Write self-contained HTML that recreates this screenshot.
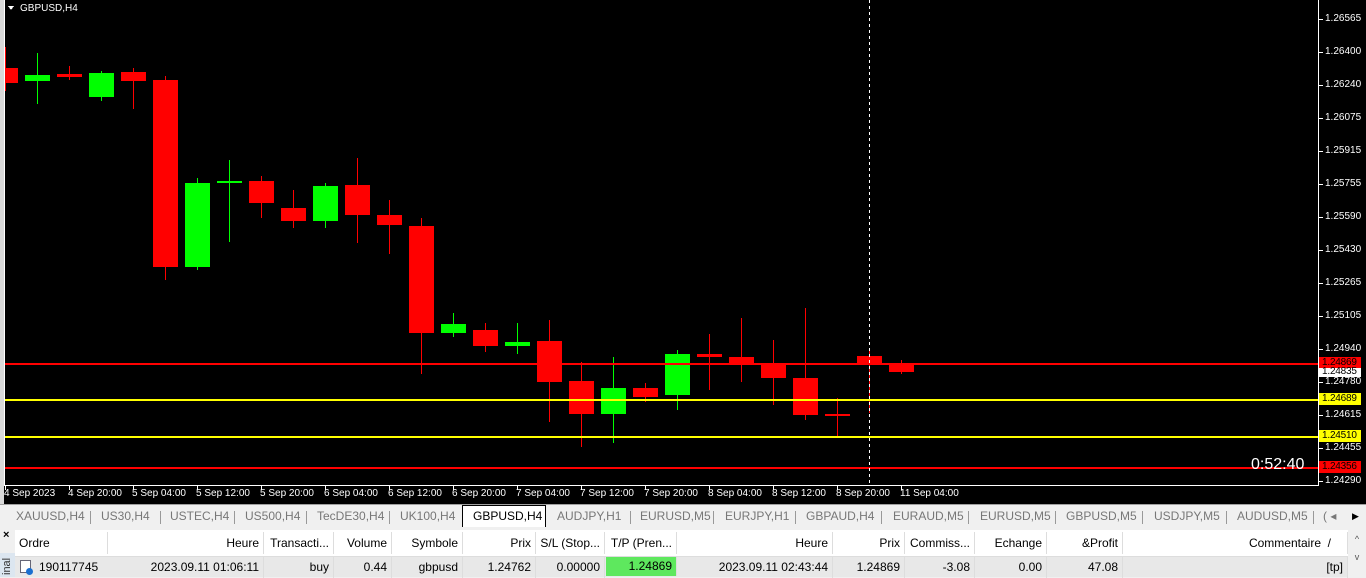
<!DOCTYPE html>
<html><head><meta charset="utf-8"><style>
*{margin:0;padding:0;box-sizing:border-box}
body{width:1366px;height:577px;overflow:hidden;background:#f0f0f0;font-family:"Liberation Sans",sans-serif;position:relative}
.ax{position:absolute;font-size:10px;color:#fff;font-family:"Liberation Sans",sans-serif}
.tg{position:absolute;font-size:10px;color:#000;left:1322px;letter-spacing:-0.2px}
.tabs{position:absolute;left:0;top:504px;width:1366px;height:24px;background:#f0f0f0;border-top:1px solid #a0a0a0}
.tab{position:absolute;top:4px;font-size:12px;color:#777;}
.sep{position:absolute;top:6px;width:1px;height:13px;background:#999}
.tbl{position:absolute;left:15px;top:530px;width:1351px;height:47px;background:#fff}
.c{position:absolute;font-size:12px;color:#000;height:22px;line-height:22px;padding:0 4px;border-right:1px solid #ddd;white-space:nowrap;overflow:hidden}
.r{text-align:right}
</style></head><body>
<svg width="1366" height="504" style="position:absolute;left:0;top:0" shape-rendering="crispEdges">
<rect x="0" y="0" width="1366" height="504" fill="#000"/>
<rect x="0" y="0" width="4" height="504" fill="#d8d8d8"/>
<rect x="4" y="0" width="1" height="485" fill="#fff"/>
<rect x="4" y="485" width="1314" height="1" fill="#fff"/>
<rect x="1318" y="0" width="1" height="486" fill="#fff"/>
<g fill="#fff">
<rect x="1319" y="19" width="4" height="1"/><rect x="1319" y="52" width="4" height="1"/><rect x="1319" y="85" width="4" height="1"/><rect x="1319" y="118" width="4" height="1"/><rect x="1319" y="151" width="4" height="1"/><rect x="1319" y="184" width="4" height="1"/><rect x="1319" y="217" width="4" height="1"/><rect x="1319" y="250" width="4" height="1"/><rect x="1319" y="283" width="4" height="1"/><rect x="1319" y="316" width="4" height="1"/><rect x="1319" y="349" width="4" height="1"/><rect x="1319" y="382" width="4" height="1"/><rect x="1319" y="415" width="4" height="1"/><rect x="1319" y="448" width="4" height="1"/><rect x="1319" y="481" width="4" height="1"/>
</g>
<g fill="#fff">
<rect x="5" y="486" width="1" height="4"/><rect x="69" y="486" width="1" height="4"/><rect x="133" y="486" width="1" height="4"/><rect x="197" y="486" width="1" height="4"/><rect x="261" y="486" width="1" height="4"/><rect x="325" y="486" width="1" height="4"/><rect x="389" y="486" width="1" height="4"/><rect x="453" y="486" width="1" height="4"/><rect x="517" y="486" width="1" height="4"/><rect x="581" y="486" width="1" height="4"/><rect x="645" y="486" width="1" height="4"/><rect x="709" y="486" width="1" height="4"/><rect x="773" y="486" width="1" height="4"/><rect x="837" y="486" width="1" height="4"/><rect x="901" y="486" width="1" height="4"/>
</g>
<g fill="#f00">
<rect x="5" y="47" width="1" height="44"/>
<rect x="69" y="66" width="1" height="14"/>
<rect x="133" y="68" width="1" height="41"/>
<rect x="165" y="76" width="1" height="204"/>
<rect x="261" y="176" width="1" height="42"/>
<rect x="293" y="190" width="1" height="38"/>
<rect x="357" y="158" width="1" height="85"/>
<rect x="389" y="200" width="1" height="54"/>
<rect x="421" y="218" width="1" height="156"/>
<rect x="485" y="323" width="1" height="29"/>
<rect x="549" y="320" width="1" height="102"/>
<rect x="581" y="362" width="1" height="85"/>
<rect x="645" y="383" width="1" height="19"/>
<rect x="709" y="334" width="1" height="56"/>
<rect x="741" y="318" width="1" height="64"/>
<rect x="773" y="340" width="1" height="65"/>
<rect x="805" y="308" width="1" height="112"/>
<rect x="837" y="398" width="1" height="39"/>
<rect x="869" y="349" width="1" height="64"/>
<rect x="901" y="360" width="1" height="14"/>
</g>
<g fill="#0f0">
<rect x="37" y="53" width="1" height="51"/>
<rect x="101" y="71" width="1" height="30"/>
<rect x="197" y="178" width="1" height="92"/>
<rect x="229" y="160" width="1" height="82"/>
<rect x="325" y="183" width="1" height="45"/>
<rect x="453" y="313" width="1" height="24"/>
<rect x="517" y="323" width="1" height="31"/>
<rect x="613" y="357" width="1" height="86"/>
<rect x="677" y="350" width="1" height="60"/>
</g>
<g fill="#f00">
<rect x="5" y="68" width="13" height="15"/>
<rect x="57" y="74" width="25" height="3"/>
<rect x="121" y="72" width="25" height="9"/>
<rect x="153" y="80" width="25" height="187"/>
<rect x="249" y="181" width="25" height="22"/>
<rect x="281" y="208" width="25" height="13"/>
<rect x="345" y="185" width="25" height="30"/>
<rect x="377" y="215" width="25" height="10"/>
<rect x="409" y="226" width="25" height="107"/>
<rect x="473" y="330" width="25" height="16"/>
<rect x="537" y="341" width="25" height="41"/>
<rect x="569" y="381" width="25" height="33"/>
<rect x="633" y="388" width="25" height="9"/>
<rect x="697" y="354" width="25" height="3"/>
<rect x="729" y="357" width="25" height="8"/>
<rect x="761" y="365" width="25" height="13"/>
<rect x="793" y="378" width="25" height="37"/>
<rect x="825" y="414" width="25" height="2"/>
<rect x="857" y="356" width="25" height="8"/>
<rect x="889" y="364" width="25" height="8"/>
</g>
<g fill="#0f0">
<rect x="25" y="75" width="25" height="6"/>
<rect x="89" y="73" width="25" height="24"/>
<rect x="185" y="183" width="25" height="84"/>
<rect x="217" y="181" width="25" height="2"/>
<rect x="313" y="186" width="25" height="35"/>
<rect x="441" y="324" width="25" height="9"/>
<rect x="505" y="342" width="25" height="4"/>
<rect x="601" y="388" width="25" height="26"/>
<rect x="665" y="354" width="25" height="41"/>
</g>
<rect x="5" y="363" width="1313" height="2" fill="#f00"/>
<rect x="5" y="399" width="1313" height="2" fill="#ff0"/>
<rect x="5" y="436" width="1313" height="2" fill="#ff0"/>
<rect x="5" y="467" width="1313" height="2" fill="#f00"/>
<line x1="869.5" y1="0" x2="869.5" y2="485" stroke="#fff" stroke-dasharray="3,3"/>
<rect x="1319" y="357" width="42" height="11" fill="#f00"/>
<rect x="1319" y="368" width="42" height="9" fill="#fff"/>
<rect x="1319" y="393" width="42" height="12" fill="#ff0"/>
<rect x="1319" y="430" width="42" height="12" fill="#ff0"/>
<rect x="1319" y="461" width="42" height="12" fill="#f00"/>
<polygon points="8,6 14,6 11,10" fill="#fff"/>
</svg>
<div class="ax" style="left:20px;top:3px;font-size:10px">GBPUSD,H4</div>
<div class="ax" style="left:1325px;top:13px">1.26565</div>
<div class="ax" style="left:1325px;top:46px">1.26400</div>
<div class="ax" style="left:1325px;top:79px">1.26240</div>
<div class="ax" style="left:1325px;top:112px">1.26075</div>
<div class="ax" style="left:1325px;top:145px">1.25915</div>
<div class="ax" style="left:1325px;top:178px">1.25755</div>
<div class="ax" style="left:1325px;top:211px">1.25590</div>
<div class="ax" style="left:1325px;top:244px">1.25430</div>
<div class="ax" style="left:1325px;top:277px">1.25265</div>
<div class="ax" style="left:1325px;top:310px">1.25105</div>
<div class="ax" style="left:1325px;top:343px">1.24940</div>
<div class="ax" style="left:1325px;top:376px">1.24780</div>
<div class="ax" style="left:1325px;top:409px">1.24615</div>
<div class="ax" style="left:1325px;top:442px">1.24455</div>
<div class="ax" style="left:1325px;top:475px">1.24290</div>
<div class="tg" style="top:357px">1.24869</div>
<div class="tg" style="top:366px">1.24835</div>
<div class="tg" style="top:393px">1.24689</div>
<div class="tg" style="top:430px">1.24510</div>
<div class="tg" style="top:461px">1.24356</div>
<div class="ax" style="left:1251px;top:456px;font-size:16px">0:52:40</div>
<div class="ax" style="left:4px;top:488px">4 Sep 2023</div>
<div class="ax" style="left:68px;top:488px">4 Sep 20:00</div>
<div class="ax" style="left:132px;top:488px">5 Sep 04:00</div>
<div class="ax" style="left:196px;top:488px">5 Sep 12:00</div>
<div class="ax" style="left:260px;top:488px">5 Sep 20:00</div>
<div class="ax" style="left:324px;top:488px">6 Sep 04:00</div>
<div class="ax" style="left:388px;top:488px">6 Sep 12:00</div>
<div class="ax" style="left:452px;top:488px">6 Sep 20:00</div>
<div class="ax" style="left:516px;top:488px">7 Sep 04:00</div>
<div class="ax" style="left:580px;top:488px">7 Sep 12:00</div>
<div class="ax" style="left:644px;top:488px">7 Sep 20:00</div>
<div class="ax" style="left:708px;top:488px">8 Sep 04:00</div>
<div class="ax" style="left:772px;top:488px">8 Sep 12:00</div>
<div class="ax" style="left:836px;top:488px">8 Sep 20:00</div>
<div class="ax" style="left:900px;top:488px">11 Sep 04:00</div>

<div class="tabs">
<div class="tab" style="left:16px">XAUUSD,H4</div><div class="sep" style="left:90px"></div>
<div class="tab" style="left:101px">US30,H4</div><div class="sep" style="left:160px"></div>
<div class="tab" style="left:170px">USTEC,H4</div><div class="sep" style="left:234px"></div>
<div class="tab" style="left:245px">US500,H4</div><div class="sep" style="left:306px"></div>
<div class="tab" style="left:317px">TecDE30,H4</div><div class="sep" style="left:389px"></div>
<div class="tab" style="left:400px">UK100,H4</div>
<div style="position:absolute;left:462px;top:0px;width:84px;height:22px;background:#fff;border:1px solid #000;border-bottom:none"></div>
<div class="tab" style="left:473px;color:#000">GBPUSD,H4</div>
<div class="tab" style="left:557px">AUDJPY,H1</div><div class="sep" style="left:630px"></div>
<div class="tab" style="left:640px">EURUSD,M5</div><div class="sep" style="left:713px"></div>
<div class="tab" style="left:725px">EURJPY,H1</div><div class="sep" style="left:795px"></div>
<div class="tab" style="left:806px">GBPAUD,H4</div><div class="sep" style="left:881px"></div>
<div class="tab" style="left:893px">EURAUD,M5</div><div class="sep" style="left:968px"></div>
<div class="tab" style="left:980px">EURUSD,M5</div><div class="sep" style="left:1055px"></div>
<div class="tab" style="left:1066px">GBPUSD,M5</div><div class="sep" style="left:1142px"></div>
<div class="tab" style="left:1154px">USDJPY,M5</div><div class="sep" style="left:1226px"></div>
<div class="tab" style="left:1237px">AUDUSD,M5</div><div class="sep" style="left:1313px"></div>
<div class="tab" style="left:1323px">( ◂</div>
<div class="tab" style="left:1352px;color:#000;font-size:9px;top:6px">▶</div>
</div>
<div style="position:absolute;left:0;top:528px;width:15px;height:49px;background:#f0f0f0"></div>
<div style="position:absolute;left:3px;top:529px;font-size:11px;font-weight:bold">×</div>
<div style="position:absolute;left:0;top:553px;width:15px;height:24px;background:#dce6f0"></div>
<div style="position:absolute;left:1px;top:575px;font-size:11px;transform:rotate(-90deg);transform-origin:0 0;color:#333">inal</div>
<div class="tbl">
<div style="position:absolute;left:0;top:26px;width:1333px;height:21px;background:#e8e8e8;border-top:1px solid #ddd"></div>
<div class="c" style="left:0;top:2px;width:93px">Ordre</div>
<div class="c r" style="left:93px;top:2px;width:156px">Heure</div>
<div class="c r" style="left:249px;top:2px;width:70px">Transacti...</div>
<div class="c r" style="left:319px;top:2px;width:58px">Volume</div>
<div class="c r" style="left:377px;top:2px;width:71px">Symbole</div>
<div class="c r" style="left:448px;top:2px;width:73px">Prix</div>
<div class="c r" style="left:521px;top:2px;width:69px">S/L (Stop...</div>
<div class="c r" style="left:590px;top:2px;width:72px">T/P (Pren...</div>
<div class="c r" style="left:662px;top:2px;width:156px">Heure</div>
<div class="c r" style="left:818px;top:2px;width:72px">Prix</div>
<div class="c r" style="left:890px;top:2px;width:70px">Commiss...</div>
<div class="c r" style="left:960px;top:2px;width:72px">Echange</div>
<div class="c r" style="left:1032px;top:2px;width:76px">&amp;Profit</div>
<div class="c r" style="left:1108px;top:2px;width:225px;padding-right:16px">Commentaire &nbsp;/</div>
<div style="position:absolute;left:5px;top:30px;width:11px;height:13px;border:1px solid #667;background:#fff"></div>
<div style="position:absolute;left:11px;top:38px;width:7px;height:7px;border-radius:50%;background:#1a6fd0"></div>
<div class="c" style="left:20px;top:26px;width:73px;border:none">190117745</div>
<div class="c r" style="left:93px;top:26px;width:156px">2023.09.11 01:06:11</div>
<div class="c r" style="left:249px;top:26px;width:70px">buy</div>
<div class="c r" style="left:319px;top:26px;width:58px">0.44</div>
<div class="c r" style="left:377px;top:26px;width:71px">gbpusd</div>
<div class="c r" style="left:448px;top:26px;width:73px">1.24762</div>
<div class="c r" style="left:521px;top:26px;width:69px">0.00000</div>
<div class="c r" style="left:591px;top:27px;width:71px;height:19px;line-height:19px;background:#5ee85e">1.24869</div>
<div class="c r" style="left:662px;top:26px;width:156px">2023.09.11 02:43:44</div>
<div class="c r" style="left:818px;top:26px;width:72px">1.24869</div>
<div class="c r" style="left:890px;top:26px;width:70px">-3.08</div>
<div class="c r" style="left:960px;top:26px;width:72px">0.00</div>
<div class="c r" style="left:1032px;top:26px;width:76px">47.08</div>
<div class="c r" style="left:1108px;top:26px;width:225px">[tp]</div>
<div style="position:absolute;left:1333px;top:0;width:18px;height:47px;background:#f0f0f0;font-size:9px;text-align:center;color:#555;line-height:18px">^<br>v</div>
</div>
</body></html>
